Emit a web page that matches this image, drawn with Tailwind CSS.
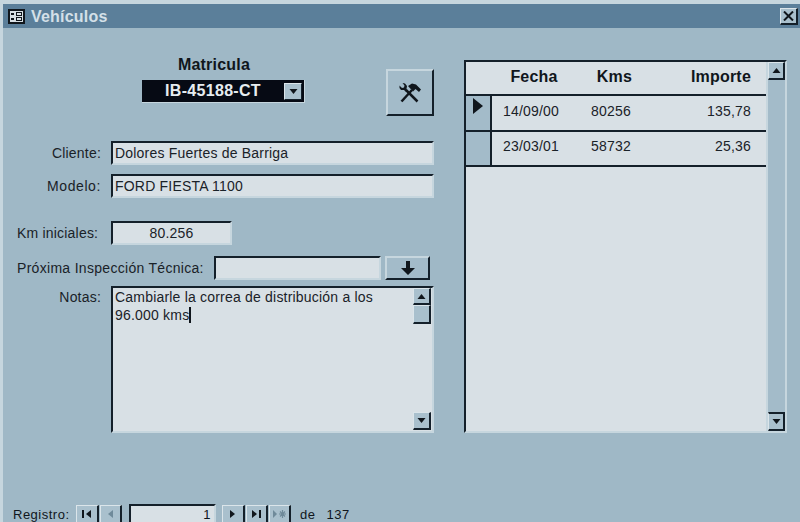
<!DOCTYPE html>
<html lang="es">
<head>
  <meta charset="UTF-8">
  <title>Vehículos</title>
  <script src="https://cdn.jsdelivr.net/npm/@tailwindcss/browser@4"></script>
</head>
<body class="m-0 bg-[#9fb8c6]">
  <div class="w-[800px] h-[522px] overflow-hidden flex flex-col bg-[#9fb8c6] border-t-[4px] border-l-[3px] border-[#c6d6de] font-['Liberation_Sans',sans-serif] text-[14px] leading-[16px] tracking-[0.2px] text-[#1a2228]">

    <!-- Title bar -->
    <div class="h-[24px] shrink-0 bg-[#5b7f9a] flex items-center pl-[5px] pr-[2px]">
      <svg width="17" height="15" viewBox="0 0 17 15" class="shrink-0">
        <rect width="17" height="15" fill="#10161c"/>
        <rect x="2" y="2" width="13" height="11" fill="#d8e0e5"/>
        <rect x="3" y="4" width="3" height="2" fill="#10161c"/>
        <rect x="3" y="9" width="3" height="2" fill="#10161c"/>
        <rect x="8" y="3" width="6" height="4" fill="#10161c"/>
        <rect x="8" y="8" width="6" height="4" fill="#10161c"/>
        <rect x="9" y="4" width="4" height="2" fill="#d8e0e5"/>
        <rect x="9" y="9" width="4" height="2" fill="#d8e0e5"/>
      </svg>
      <span class="ml-[6px] pt-[1px] font-bold text-[16px] tracking-[0.2px] text-[#d4e0e8]">Vehículos</span>
      <div class="ml-auto w-[18px] h-[17px] flex items-center justify-center bg-[#a9c0cd] border-t border-l border-[#dbe5ea] border-r-2 border-b-2 border-r-[#14202a] border-b-[#14202a]">
        <svg width="11" height="10" viewBox="0 0 11 10"><path d="M1 0.5 L10 9.5 M10 0.5 L1 9.5" stroke="#10161c" stroke-width="2"/></svg>
      </div>
    </div>

    <!-- Form body -->
    <div class="flex-1 flex pt-[32px]">
      <div class="w-[431px] shrink-0 flex flex-col">

        <div class="flex h-[81px]">
          <div class="w-[302px] pl-[139px] flex flex-col">
            <div class="text-center font-bold text-[16px] tracking-[0.2px] text-[#10161c] w-[163px] h-[23px] mt-[-3px] pr-[19px]">Matricula</div>
            <div class="w-[163px] h-[23px] bg-[#060a14] border-b border-r border-[#c6d6de] flex items-center pr-[2px]">
              <span class="flex-1 text-center font-bold text-[16px] tracking-[0.3px] text-[#e6ecf0]">IB-45188-CT</span>
              <div class="w-[18px] h-[17px] flex items-center justify-center bg-[#a9c0cd] border-t border-l border-[#dbe5ea] border-r border-b border-r-[#14202a] border-b-[#14202a]">
                <svg width="9" height="5" viewBox="0 0 9 5"><path d="M0.5 0 H8.5 L4.5 5 Z" fill="#10161c"/></svg>
              </div>
            </div>
          </div>
          <div class="ml-[81px] mt-[9px] w-[49px] h-[47px] flex items-center justify-center bg-[#a3bbc9] border-t-2 border-l-2 border-[#c6d6de] border-r-2 border-b-2 border-r-[#14202a] border-b-[#14202a]">
            <svg width="24" height="24" viewBox="0 0 24 24">
              <path d="M3.5 20.5 L14 9" stroke="#10161c" stroke-width="2.5"/>
              <path d="M10 5 L14 2.5 L18 3.5 L23 8.5 L21 11 L17.5 8 L15 10.5 Z" fill="#10161c"/>
              <path d="M8 9 L19.5 20.5" stroke="#10161c" stroke-width="2.5"/>
              <path d="M1.5 4.5 L4 7 L6 6.5 L6.5 4.5 L4.5 2 L7 2.5 L9 5 L8.5 8 L9.5 9.5 L7.5 10.5 L6 9 L3 9 L1.5 7 Z" fill="#10161c"/>
            </svg>
          </div>
        </div>

        <div class="flex items-center h-[24px]">
          <span class="w-[98px] text-right">Cliente:</span>
          <div class="ml-[10px] w-[323px] h-full flex items-center pl-[2px] bg-[#d8e0e5] border-t-2 border-l-2 border-[#14202a] border-r-2 border-b-2 border-r-[#c6d6de] border-b-[#c6d6de]">Dolores Fuertes de Barriga</div>
        </div>
        <div class="flex items-center h-[24px] mt-[9px]">
          <span class="w-[98px] text-right tracking-[0.6px]">Modelo:</span>
          <div class="ml-[10px] w-[323px] h-full flex items-center pl-[2px] bg-[#d8e0e5] border-t-2 border-l-2 border-[#14202a] border-r-2 border-b-2 border-r-[#c6d6de] border-b-[#c6d6de]">FORD FIESTA 1100</div>
        </div>

        <div class="flex items-center h-[24px] mt-[23px]">
          <span class="w-[98px] pl-[14px] whitespace-nowrap">Km iniciales:</span>
          <div class="ml-[10px] w-[121px] h-full flex items-center justify-center bg-[#d8e0e5] border-t-2 border-l-2 border-[#14202a] border-r-2 border-b-2 border-r-[#c6d6de] border-b-[#c6d6de]">80.256</div>
        </div>

        <div class="flex items-center h-[24px] mt-[11px]">
          <span class="w-[211px] pl-[14px] whitespace-nowrap tracking-[0.3px]">Próxima Inspección Técnica:</span>
          <div class="w-[167px] h-full bg-[#d8e0e5] border-t-2 border-l-2 border-[#14202a] border-r-2 border-b-2 border-r-[#c6d6de] border-b-[#c6d6de]"></div>
          <div class="ml-[4px] w-[45px] h-full flex items-center justify-center bg-[#a3bbc9] border-t-2 border-l-2 border-[#c6d6de] border-r-2 border-b-2 border-r-[#14202a] border-b-[#14202a]">
            <svg width="16" height="14" viewBox="0 0 16 14"><path d="M6 0 H10 V7 H15 L8 14 L1 7 H6 Z" fill="#10161c"/></svg>
          </div>
        </div>

        <div class="flex h-[147px] mt-[6px]">
          <span class="w-[98px] text-right pt-[3px]">Notas:</span>
          <div class="ml-[10px] w-[323px] h-full flex bg-[#d8e0e5] border-t-2 border-l-2 border-[#14202a] border-r-2 border-b-2 border-r-[#c6d6de] border-b-[#c6d6de]">
            <div class="flex-1 pl-[2px] leading-[18px]">Cambiarle la correa de distribución a los<br>96.000 kms<span class="inline-block w-[2px] h-[16px] bg-[#10161c] align-[-3px]"></span></div>
            <div class="w-[19px] flex flex-col pb-[1px] pr-[1px]">
              <div class="h-[17px] flex items-center justify-center bg-[#a9c0cd] border-t border-l border-[#dbe5ea] border-r-2 border-b-2 border-r-[#14202a] border-b-[#14202a]">
                <svg width="9" height="5" viewBox="0 0 9 5"><path d="M0.5 5 H8.5 L4.5 0 Z" fill="#10161c"/></svg>
              </div>
              <div class="h-[19px] bg-[#a9c0cd] border-t border-l border-[#dbe5ea] border-r-2 border-b-2 border-r-[#14202a] border-b-[#14202a]"></div>
              <div class="mt-auto h-[18px] flex items-center justify-center bg-[#a9c0cd] border-t border-l border-[#dbe5ea] border-r-2 border-b-2 border-r-[#14202a] border-b-[#14202a]">
                <svg width="9" height="5" viewBox="0 0 9 5"><path d="M0.5 0 H8.5 L4.5 5 Z" fill="#10161c"/></svg>
              </div>
            </div>
          </div>
        </div>
      </div>

      <!-- Subform -->
      <div class="ml-[30px] w-[323px] h-[373px] flex bg-[#d8e0e5] border-t-2 border-l-2 border-[#14202a] border-r-2 border-b-2 border-r-[#c6d6de] border-b-[#c6d6de]">
        <div class="flex-1 flex flex-col">
          <div class="h-[30px] pb-[2px] flex items-center font-bold text-[16px] text-[#10161c] border-b-2 border-[#14202a] box-content">
            <span class="w-[26px]"></span>
            <span class="w-[99px] pr-[15px] text-center">Fecha</span>
            <span class="w-[60px] pr-[13px] text-center">Kms</span>
            <span class="w-[100px] text-right">Importe</span>
          </div>
          <div class="h-[34px] flex border-b-2 border-[#14202a] box-content">
            <div class="w-[24px] bg-[#a3bbc9] border-r-2 border-[#14202a] box-content flex justify-center pt-[2px]">
              <svg width="10" height="16" viewBox="0 0 10 16"><path d="M0 0 L10 8 L0 16 Z" fill="#10161c"/></svg>
            </div>
            <span class="w-[99px] pl-[11px] pt-[7px]">14/09/00</span>
            <span class="w-[60px] pt-[7px]">80256</span>
            <span class="w-[100px] pt-[7px] text-right">135,78</span>
          </div>
          <div class="h-[33px] flex border-b-2 border-[#14202a] box-content">
            <div class="w-[24px] bg-[#a3bbc9] border-r-2 border-[#14202a] box-content"></div>
            <span class="w-[99px] pl-[11px] pt-[6px]">23/03/01</span>
            <span class="w-[60px] pt-[6px]">58732</span>
            <span class="w-[100px] pt-[6px] text-right">25,36</span>
          </div>
        </div>
        <div class="w-[17px] flex flex-col bg-[#a3bbc9] border-l-2 border-[#c6d6de] box-content">
          <div class="h-[18px] flex items-center justify-center bg-[#a9c0cd] border-t border-l border-[#dbe5ea] border-r-2 border-b-2 border-r-[#14202a] border-b-[#14202a]">
            <svg width="9" height="5" viewBox="0 0 9 5"><path d="M0.5 5 H8.5 L4.5 0 Z" fill="#10161c"/></svg>
          </div>
          <div class="mt-auto h-[19px] flex items-center justify-center bg-[#a9c0cd] border-t-2 border-l border-t-[#14202a] border-l-[#dbe5ea] border-r-2 border-b-2 border-r-[#14202a] border-b-[#14202a]">
            <svg width="9" height="5" viewBox="0 0 9 5"><path d="M0.5 0 H8.5 L4.5 5 Z" fill="#10161c"/></svg>
          </div>
        </div>
      </div>
    </div>

    <!-- Record navigation, cut off by the window bottom -->
    <div class="h-[17px] shrink-0 flex items-start pl-[10px] text-[13px] tracking-[0.5px] text-[#10161c]">
      <span class="w-[63px] pt-[2px] whitespace-nowrap">Registro:</span>
      <div class="w-[23px] h-[17px] flex items-center justify-center bg-[#a9c0cd] border-t border-l border-[#dbe5ea] border-r-2 border-r-[#14202a]">
        <svg width="10" height="8" viewBox="0 0 10 8"><path d="M0 0 H2 V8 H0 Z M9 0 V8 L4 4 Z" fill="#10161c"/></svg>
      </div>
      <div class="ml-[1px] w-[22px] h-[17px] flex items-center justify-center bg-[#a9c0cd] border-t border-l border-[#dbe5ea] border-r-2 border-r-[#14202a]">
        <svg width="6" height="8" viewBox="0 0 6 8"><path d="M5 0 V8 L0 4 Z" fill="#6f8a9a"/></svg>
      </div>
      <div class="ml-[7px] w-[87px] h-[18px] mt-[-1px] text-right pr-[3px] pt-[1px] bg-[#d8e0e5] border-t-2 border-l-2 border-r-2 border-[#14202a] border-r-[#c6d6de]">1</div>
      <div class="ml-[6px] w-[23px] h-[17px] flex items-center justify-center bg-[#a9c0cd] border-t border-l border-[#dbe5ea] border-r-2 border-r-[#14202a]">
        <svg width="6" height="8" viewBox="0 0 6 8"><path d="M0 0 V8 L5 4 Z" fill="#10161c"/></svg>
      </div>
      <div class="ml-[1px] w-[22px] h-[17px] flex items-center justify-center bg-[#a9c0cd] border-t border-l border-[#dbe5ea] border-r-2 border-r-[#14202a]">
        <svg width="10" height="8" viewBox="0 0 10 8"><path d="M0 0 V8 L5 4 Z M7 0 H9 V8 H7 Z" fill="#10161c"/></svg>
      </div>
      <div class="ml-[1px] w-[22px] h-[17px] flex items-center justify-center bg-[#a9c0cd] border-t border-l border-[#dbe5ea] border-r-2 border-r-[#14202a]">
        <svg width="14" height="8" viewBox="0 0 14 8"><path d="M0 0 V8 L4 4 Z" fill="#6f8a9a"/><path d="M9.5 0 V8 M6 4 H13 M7 1.5 L12 6.5 M12 1.5 L7 6.5" stroke="#6f8a9a" stroke-width="1.2"/></svg>
      </div>
      <span class="ml-[9px] pt-[2px] whitespace-nowrap">de</span>
      <span class="ml-[11px] pt-[2px] whitespace-nowrap">137</span>
    </div>
  </div>
</body>
</html>
